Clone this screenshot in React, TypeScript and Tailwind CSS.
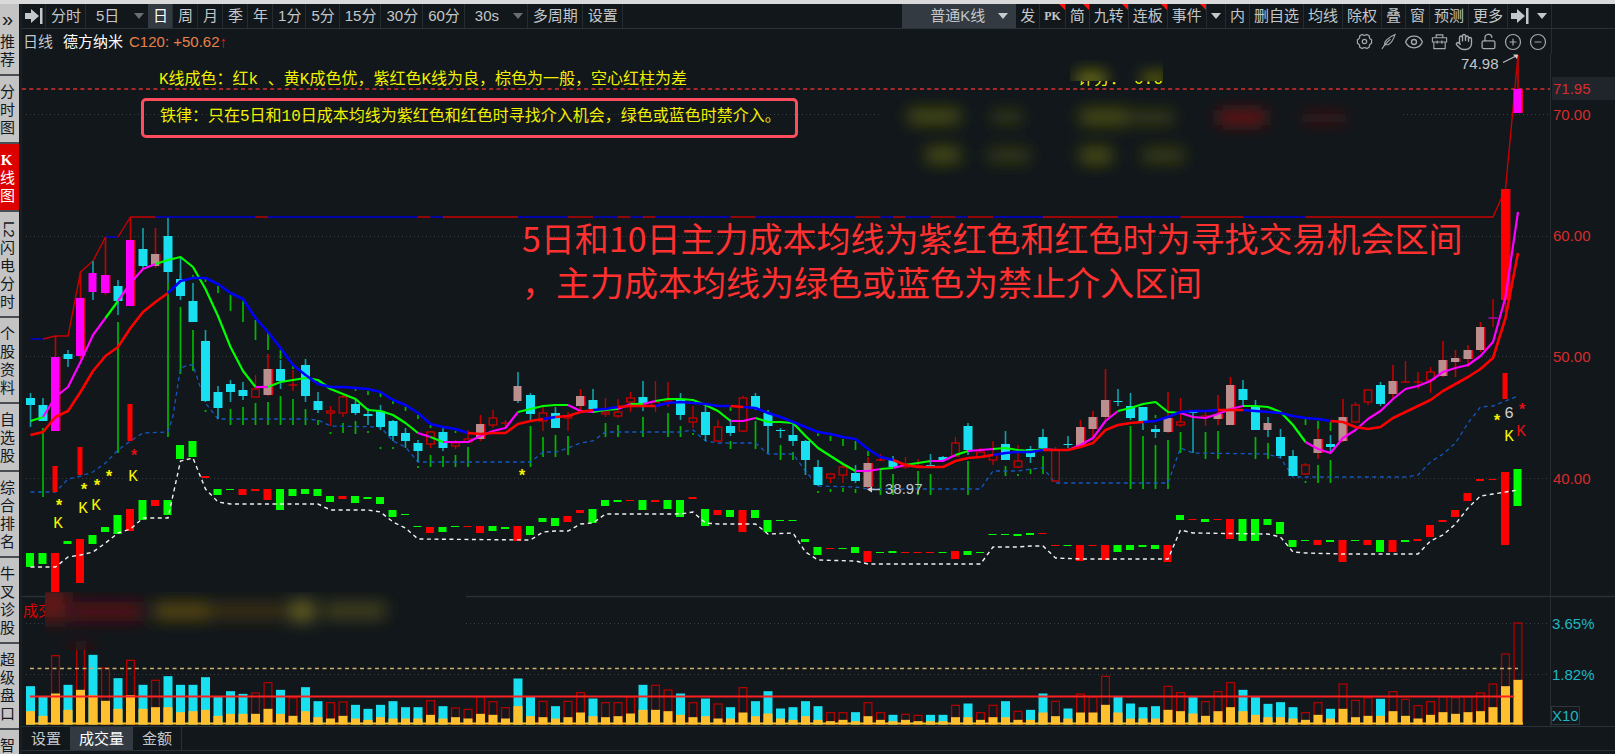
import React from 'react';
import { CircleMinus, CirclePlus, Eye, Hand, LockOpen } from 'lucide-react';

type Candle = [kind: string, high: number, top: number, bottom: number, low: number];

// kinds: c falling, r hollow rising, R solid rising, m/M magenta, b/B brown (capitals: cyan wick), x cross
const candles: Candle[] = [
  ['c', 393, 398, 405, 427], ['c', 398, 405, 421, 421], ['m', 336, 357, 431, 431], ['c', 350, 354, 359, 367],
  ['m', 271, 298, 356, 359], ['M', 261, 273, 292, 300], ['m', 237, 275, 293, 295], ['c', 280, 286, 301, 315],
  ['m', 217, 240, 306, 306], ['c', 228, 249, 266, 269], ['b', 228, 254, 266, 268], ['c', 218, 236, 272, 283],
  ['c', 258, 279, 296, 300], ['c', 283, 301, 322, 322], ['c', 330, 341, 401, 402], ['c', 386, 392, 408, 419],
  ['c', 380, 384, 392, 402], ['c', 382, 390, 396, 400], ['r', 375, 389, 397, 397], ['b', 354, 369, 395, 396],
  ['c', 360, 369, 381, 389], ['x', 370, 385, 385, 391], ['c', 359, 365, 396, 402], ['c', 392, 401, 410, 413],
  ['r', 406, 411, 413, 426], ['r', 395, 397, 413, 417], ['c', 400, 404, 413, 415], ['c', 408, 414, 416, 425],
  ['c', 405, 411, 427, 430], ['c', 420, 421, 436, 441], ['c', 428, 433, 441, 448], ['c', 440, 443, 451, 462],
  ['r', 431, 432, 444, 448], ['c', 428, 432, 448, 451], ['r', 440, 443, 446, 449], ['r', 430, 439, 442, 443],
  ['b', 415, 424, 439, 441], ['r', 410, 418, 425, 428], ['x', 420, 423, 423, 427], ['B', 372, 386, 401, 403],
  ['c', 393, 395, 414, 420], ['r', 407, 413, 421, 431], ['c', 407, 413, 428, 428], ['r', 412, 416, 418, 431],
  ['b', 389, 396, 406, 411], ['c', 389, 400, 409, 413], ['r', 398, 412, 414, 417], ['r', 399, 412, 416, 418],
  ['r', 392, 398, 402, 412], ['c', 381, 397, 403, 411], ['r', 381, 402, 406, 412], ['x', 382, 401, 401, 407],
  ['c', 393, 400, 415, 420], ['r', 406, 418, 422, 428], ['c', 406, 412, 435, 441], ['r', 420, 427, 441, 442],
  ['c', 419, 426, 433, 436], ['r', 396, 398, 431, 432], ['c', 393, 396, 409, 410], ['c', 410, 413, 426, 453],
  ['c', 428, 430, 431, 438], ['c', 423, 435, 441, 446], ['c', 440, 441, 460, 475], ['c', 460, 467, 485, 486],
  ['r', 473, 474, 478, 483], ['r', 463, 467, 475, 483], ['c', 465, 473, 481, 483], ['b', 457, 463, 487, 489],
  ['x', 454, 460, 460, 461], ['c', 456, 460, 467, 468], ['r', 457, 464, 467, 469], ['x', 459, 466, 466, 468],
  ['c', 454, 465, 466, 468], ['c', 456, 457, 460, 461], ['r', 437, 443, 456, 457], ['c', 423, 426, 450, 455],
  ['r', 448, 452, 457, 457], ['r', 441, 455, 460, 465], ['c', 431, 444, 460, 460], ['r', 445, 461, 467, 468],
  ['c', 446, 449, 457, 463], ['c', 429, 437, 448, 449], ['r', 447, 450, 481, 482], ['c', 436, 444, 445, 448],
  ['b', 420, 427, 446, 447], ['b', 411, 417, 429, 438], ['b', 369, 400, 417, 420], ['c', 389, 401, 402, 406],
  ['c', 393, 406, 418, 420], ['c', 407, 407, 422, 430], ['c', 425, 429, 432, 438], ['b', 392, 418, 432, 433],
  ['r', 398, 422, 425, 427], ['c', 412, 412, 413, 453], ['x', 410, 416, 416, 426], ['b', 395, 414, 419, 425],
  ['b', 377, 385, 425, 425], ['c', 380, 389, 400, 407], ['c', 400, 407, 430, 430], ['B', 417, 423, 430, 437],
  ['c', 429, 437, 456, 458], ['c', 450, 456, 476, 476], ['r', 463, 465, 474, 475], ['b', 429, 439, 453, 459],
  ['c', 435, 444, 447, 452], ['b', 399, 417, 441, 442], ['r', 402, 405, 422, 422], ['r', 389, 390, 402, 405],
  ['c', 382, 385, 404, 406], ['b', 365, 381, 394, 398], ['x', 361, 382, 382, 383], ['x', 372, 382, 382, 389],
  ['r', 367, 372, 380, 393], ['b', 341, 360, 376, 377], ['b', 350, 358, 362, 377], ['b', 345, 350, 359, 367],
  ['b', 322, 327, 350, 352], ['x', 299, 318, 318, 327], ['R', 189, 189, 300, 312], ['m', 55, 89, 113, 113],
];

const ma5 = [
  421, 417, 397, 387, 362, 335, 318, 301, 283, 269, 264, 260, 257, 267, 289, 316, 347, 371, 387, 387,
  382, 380, 378, 380, 389, 394, 399, 410, 411, 415, 423, 433, 437, 442, 442, 442, 436, 431, 428, 412,
  409, 406, 405, 405, 411, 412, 410, 409, 404, 404, 401, 399, 399, 400, 405, 411, 421, 421, 418, 422,
  422, 423, 436, 448, 456, 464, 471, 471, 469, 468, 465, 463, 461, 461, 455, 451, 450, 449, 448, 450,
  451, 449, 450, 450, 445, 438, 421, 411, 408, 404, 402, 412, 413, 417, 418, 414, 409, 406, 406, 407,
  412, 425, 442, 449, 453, 438, 430, 419, 411, 399, 389, 386, 381, 372, 368, 365, 356, 342, 297, 212,
];

const ma10 = [
  435, 432, 417, 411, 392, 371, 356, 347, 328, 312, 302, 293, 281, 278, 278, 284, 293, 299, 318, 332,
  348, 365, 375, 384, 387, 387, 388, 389, 392, 400, 405, 413, 424, 427, 429, 433, 434, 433, 433, 424,
  421, 419, 417, 416, 412, 410, 409, 407, 406, 406, 406, 403, 402, 403, 404, 406, 406, 407, 408, 413,
  417, 422, 427, 432, 434, 437, 439, 449, 457, 460, 465, 467, 467, 467, 461, 458, 457, 455, 453, 452,
  452, 450, 450, 450, 447, 443, 430, 425, 423, 422, 421, 417, 412, 411, 411, 410, 410, 410, 411, 412,
  413, 416, 418, 419, 421, 422, 427, 429, 427, 418, 412, 406, 400, 391, 384, 377, 369, 358, 318, 253,
];

// runs of [last bar index, rising]
const trend5: [number, boolean][] = [
  [1, false], [6, true], [7, false], [10, true], [18, false], [19, true], [31, false], [32, true], [33, false],
  [39, true], [43, false], [45, true], [47, false], [48, true], [49, false], [50, true], [56, false], [58, true],
  [66, false], [68, true], [69, false], [70, true], [72, false], [74, true], [75, false], [77, true], [81, false],
  [87, true], [92, false], [97, true], [102, false], [119, true],
];
const trend10: [number, boolean][] = [
  [11, true], [35, false], [41, true], [42, false], [45, true], [47, false], [50, true], [56, false], [57, true],
  [69, false], [77, true], [81, false], [89, true], [95, false], [97, true], [104, false], [119, true],
];

const upper = [339, 339, 336, 336, 272, 261, 237, 237].concat(Array(110).fill(217), [189, 55]);

// [bar index, y] corner points
const support: [number, number][] = [
  [0, 492], [2, 492], [3, 479], [4, 476], [5, 472], [6, 463], [7, 450], [8, 441], [9, 433], [11, 432], [11.4, 416],
  [12, 368], [12.6, 365], [13, 365], [14, 403], [15, 419], [22, 419], [23, 420], [24, 426], [28, 427], [29, 441],
  [30, 447], [31, 462], [40, 462], [41, 452], [42, 452], [43, 448], [44, 443], [45, 441], [46, 432], [52, 432],
  [53, 430], [54, 441], [55, 443], [58, 443], [59, 454], [61, 454], [62, 471], [63, 486], [66, 487], [67, 489],
  [76, 489], [77, 471], [79, 471], [80, 469], [81, 468], [82, 483], [91, 483], [92, 448], [93, 453], [99, 454],
  [100, 458], [101, 477], [110, 477], [111, 475], [112, 462], [113, 454], [114, 443], [115, 423], [116, 407],
  [117, 406], [118, 401], [119, 396],
];
const signal: [number, number][] = [
  [0, 567], [2, 567], [3, 557], [4, 555], [5, 552], [6, 543], [7, 533], [8, 529], [9, 518], [11, 518], [12, 461],
  [13, 458], [14, 489], [15, 502], [16, 504], [23, 504], [24, 510], [27, 510], [28, 512], [29, 522], [30, 528],
  [31, 539], [40, 540], [41, 532], [42, 531], [43, 531], [44, 524], [45, 523], [46, 514], [52, 514], [53, 512],
  [54, 523], [55, 524], [58, 524], [59, 534], [61, 533], [62, 552], [63, 560], [66, 561], [67, 564], [76, 564],
  [77, 547], [79, 547], [80, 546], [81, 546], [82, 558], [84, 559], [91, 559], [92, 530], [93, 533], [99, 534],
  [100, 537], [101, 552], [102, 553], [105, 554], [110, 554], [111, 554], [112, 541], [113, 535], [114, 524],
  [115, 508], [116, 496], [117, 494], [118, 492], [119, 490],
];

type Block = [color: 'g' | 'r', top: number, bottom: number];
const blocks: Block[] = [
  ['g', 553, 567], ['g', 553, 564], ['r', 553, 592], ['g', 541, 544], ['r', 539, 583], ['g', 535, 544], ['g', 527, 532],
  ['g', 515, 534], ['r', 509, 531], ['g', 500, 520], ['r', 500, 506], ['g', 500, 515], ['g', 445, 459], ['g', 441, 457],
  ['r', 476, 478], ['g', 489, 495], ['g', 489, 490], ['r', 489, 495], ['r', 489, 491], ['r', 489, 500], ['g', 489, 510],
  ['g', 489, 496], ['g', 489, 494], ['g', 489, 496], ['g', 496, 502], ['r', 496, 499], ['g', 496, 503], ['g', 497, 499],
  ['g', 497, 504], ['g', 510, 517], ['g', 514, 515], ['g', 526, 527], ['r', 527, 533], ['g', 527, 532], ['g', 526, 527],
  ['r', 526, 527], ['r', 526, 533], ['g', 526, 531], ['g', 527, 529], ['r', 526, 541], ['g', 526, 535], ['g', 518, 522],
  ['g', 518, 526], ['r', 516, 522], ['r', 510, 513], ['g', 509, 523], ['g', 500, 506], ['g', 500, 502], ['r', 500, 501],
  ['g', 500, 510], ['r', 500, 502], ['g', 500, 509], ['g', 500, 517], ['r', 497, 499], ['g', 509, 526], ['r', 510, 515],
  ['g', 510, 517], ['r', 510, 532], ['g', 510, 518], ['g', 520, 532], ['g', 520, 521], ['g', 520, 521], ['g', 539, 542],
  ['g', 547, 555], ['r', 548, 549], ['g', 548, 549], ['g', 547, 553], ['r', 551, 562], ['g', 552, 553], ['g', 551, 553],
  ['r', 552, 553], ['r', 552, 553], ['r', 552, 553], ['g', 552, 553], ['r', 551, 559], ['g', 551, 555], ['g', 552, 553],
  ['g', 534, 535], ['g', 534, 535], ['g', 534, 536], ['g', 533, 535], ['r', 533, 534], ['r', 545, 546], ['g', 545, 546],
  ['r', 545, 561], ['r', 545, 546], ['r', 545, 560], ['g', 545, 552], ['g', 545, 550], ['g', 545, 547], ['g', 545, 549],
  ['r', 545, 562], ['g', 515, 520], ['r', 519, 520], ['g', 519, 522], ['r', 519, 520], ['r', 519, 539], ['g', 519, 541],
  ['g', 519, 541], ['g', 519, 525], ['g', 522, 534], ['g', 540, 547], ['g', 540, 541], ['r', 540, 545], ['g', 540, 542],
  ['r', 540, 562], ['g', 540, 541], ['r', 540, 545], ['g', 540, 552], ['r', 540, 552], ['g', 540, 542], ['r', 539, 541],
  ['r', 525, 537], ['r', 520, 522], ['r', 510, 517], ['r', 493, 501], ['r', 479, 481], ['r', 479, 480], ['r', 472, 545],
  ['g', 469, 506],
];

// [bar index, top, bottom]
const greenTicks = [
  [1, 428, 497], [7, 322, 453], [11, 283, 437], [12, 273, 279], [12, 307, 374], [13, 275, 278], [13, 330, 371],
  [14, 279, 282], [14, 410, 412], [15, 286, 293], [16, 295, 311], [16, 409, 425], [17, 301, 322], [17, 407, 425],
  [18, 320, 340], [18, 403, 425], [19, 333, 350], [19, 402, 425], [20, 350, 359], [20, 396, 425], [21, 366, 369],
  [21, 399, 425], [22, 409, 425], [23, 420, 425], [24, 432, 434], [25, 423, 433], [26, 389, 391], [26, 421, 434],
  [27, 391, 395], [27, 431, 433], [28, 393, 397], [28, 447, 449], [29, 401, 404], [29, 447, 449], [30, 407, 411],
  [31, 415, 419], [31, 466, 468], [32, 425, 428], [32, 455, 467], [33, 456, 467], [34, 431, 433], [34, 455, 467],
  [35, 447, 467], [40, 426, 467], [41, 437, 457], [42, 435, 457], [43, 436, 455], [46, 423, 437], [47, 425, 437],
  [49, 417, 437], [51, 413, 437], [52, 426, 437], [53, 433, 435], [56, 407, 411], [56, 441, 449], [58, 421, 449],
  [60, 445, 460], [61, 452, 460], [63, 433, 436], [63, 491, 493], [64, 436, 441], [64, 489, 492], [65, 439, 446],
  [65, 488, 492], [66, 441, 450], [66, 489, 493], [67, 451, 456], [68, 468, 495], [69, 474, 495], [71, 471, 495],
  [72, 474, 495], [75, 461, 495], [78, 466, 476], [79, 474, 476], [80, 469, 474], [81, 456, 474], [88, 426, 489],
  [89, 436, 489], [90, 415, 418], [90, 445, 489], [91, 440, 489], [92, 432, 453], [94, 432, 459], [95, 431, 459],
  [98, 437, 459], [99, 443, 459], [102, 419, 425], [102, 481, 483], [103, 421, 429], [103, 465, 483], [104, 422, 431],
  [104, 460, 483],
];
const redMarks = [[2, 466, 492], [4, 447, 475], [8, 404, 441], [118, 373, 399]];

// [c/r, height, big-order height] in thirds of a unit
const volumes: [string, number, number][] = [
  ['c', 115, 40], ['c', 83, 26], ['r', 208, 93], ['c', 119, 44], ['r', 228, 104], ['c', 209, 88], ['r', 171, 71],
  ['c', 139, 47], ['r', 194, 88], ['c', 119, 47], ['r', 134, 52], ['c', 145, 52], ['c', 119, 37], ['c', 119, 40],
  ['c', 142, 44], ['c', 85, 26], ['c', 100, 32], ['c', 92, 32], ['r', 96, 32], ['r', 127, 47], ['c', 104, 32],
  ['r', 81, 26], ['c', 112, 40], ['c', 70, 22], ['r', 67, 18], ['r', 69, 26], ['c', 59, 18], ['c', 47, 14],
  ['c', 59, 22], ['c', 70, 18], ['c', 52, 18], ['c', 52, 18], ['r', 73, 29], ['c', 55, 18], ['r', 51, 22],
  ['r', 47, 18], ['r', 85, 32], ['r', 70, 29], ['r', 52, 18], ['c', 138, 55], ['c', 84, 25], ['r', 71, 22],
  ['c', 55, 18], ['r', 71, 22], ['r', 97, 36], ['c', 78, 25], ['r', 67, 22], ['r', 67, 25], ['r', 84, 33],
  ['c', 119, 44], ['r', 119, 44], ['r', 105, 40], ['c', 93, 29], ['r', 67, 22], ['c', 78, 25], ['r', 63, 18],
  ['c', 52, 18], ['r', 112, 36], ['c', 70, 25], ['c', 100, 33], ['c', 48, 18], ['c', 52, 14], ['c', 70, 25],
  ['c', 55, 14], ['r', 37, 10], ['r', 37, 14], ['c', 37, 10], ['r', 67, 25], ['r', 37, 14], ['c', 29, 10],
  ['r', 32, 14], ['r', 29, 10], ['c', 29, 10], ['c', 29, 10], ['r', 59, 22], ['c', 63, 22], ['r', 37, 14],
  ['r', 59, 22], ['c', 70, 22], ['r', 41, 14], ['c', 44, 14], ['c', 93, 36], ['r', 71, 25], ['c', 48, 18],
  ['r', 93, 36], ['r', 84, 36], ['r', 146, 59], ['c', 84, 36], ['c', 63, 18], ['c', 52, 18], ['c', 55, 18],
  ['r', 116, 44], ['r', 97, 40], ['c', 82, 33], ['r', 70, 26], ['r', 100, 40], ['r', 127, 52], ['c', 104, 40],
  ['c', 82, 29], ['c', 62, 22], ['c', 67, 22], ['c', 52, 18], ['r', 37, 14], ['r', 67, 29], ['c', 47, 18],
  ['r', 123, 47], ['r', 74, 22], ['r', 82, 26], ['c', 77, 26], ['r', 100, 40], ['r', 77, 26], ['r', 58, 18],
  ['r', 70, 29], ['r', 85, 37], ['r', 82, 32], ['r', 85, 37], ['r', 96, 40], ['r', 123, 52], ['r', 213, 115],
  ['r', 306, 134],
];

const marks: [x: number, y: number, text: string, color: string][] = [
  [59, 504, '*', '#f4f400'], [84, 488, '*', '#f4f400'], [97, 484, '*', '#f4f400'], [109, 475, '*', '#f4f400'],
  [134, 454, '*', '#e01010'], [522, 474, '*', '#f4f400'], [1497, 419, '*', '#f4f400'], [1522, 408, '*', '#e01010'],
  [58, 523, 'K', '#f4f400'], [83, 508, 'K', '#f4f400'], [96, 505, 'K', '#f4f400'], [133, 476, 'K', '#f4f400'],
  [1509, 436, 'K', '#f4f400'], [1521, 431, 'K', '#e01010'], [1509, 413, '6', '#d0d0d0'],
];

const STEP = 12.5;
const BASE = 724.5;
const px = (i: number) => 30.5 + i * STEP;
const CYAN = '#18e0f0';
const RED = '#c80000';

const bodyColors: Record<string, string> = {
  c: CYAN, m: '#ff00ff', M: '#ff00ff', b: '#bc8f8f', B: '#bc8f8f', R: '#ff0000',
};

function toPoints(points: [number, number][]) {
  return points.map(([i, y]) => `${px(i)},${y}`).join(' ');
}

function TrendLine({ values, runs, up, down, width }: {
  values: number[]; runs: [number, boolean][]; up: string; down: string; width: number;
}) {
  return (
    <g fill="none" strokeWidth={width} strokeLinejoin="round">
      {runs.map(([end, rising], n) => {
        const start = n === 0 ? 0 : runs[n - 1][0];
        const part = values.slice(start, end + 1).map((y, k): [number, number] => [start + k, y]);
        return <polyline key={end} points={toPoints(part)} stroke={rising ? up : down} />;
      })}
    </g>
  );
}

function CandleBar({ i, candle }: { i: number; candle: Candle }) {
  const [kind, high, top, bottom, low] = candle;
  const x = px(i);
  const cyanWick = kind === 'c' || kind === 'M' || kind === 'B';
  const wick = cyanWick ? '#12a0ac' : RED;
  if (kind === 'x') {
    return (
      <g stroke={RED} strokeWidth="1.4">
        <path d={`M${x} ${high}V${low}`} />
        <path d={`M${x - 4.5} ${top}h9`} stroke={i === 117 ? '#c000c0' : RED} />
      </g>
    );
  }
  if (kind === 'r') {
    return (
      <g stroke={RED} strokeWidth="1.3" fill="none">
        <path d={`M${x} ${high}V${top}M${x} ${bottom}V${low}`} />
        <rect x={x - 3.8} y={top} width="7.6" height={bottom - top} />
      </g>
    );
  }
  return (
    <g>
      <path d={`M${x} ${high}V${low}`} stroke={wick} strokeWidth="1.6" />
      {!cyanWick && <rect x={x + 3} y={top} width="2" height={bottom - top} fill="#e00020" />}
      <rect x={x - 4.5} y={top} width={kind === 'c' ? 9 : 8} height={bottom - top} fill={bodyColors[kind]} />
    </g>
  );
}

function AxisLabels() {
  return (
    <g fontSize="15" fontFamily="Liberation Sans, Arial, sans-serif">
      <rect x="1552" y="77" width="63" height="23" fill="#1f252b" />
      <g fill="#d82c2c">
        <text x="1553" y="94">71.95</text>
        <text x="1553" y="120">70.00</text>
        <text x="1553" y="241">60.00</text>
        <text x="1553" y="362">50.00</text>
        <text x="1553" y="484">40.00</text>
      </g>
      <g fill="#1cb8c4">
        <text x="1552" y="629">3.65%</text>
        <text x="1552" y="680">1.82%</text>
        <rect x="1551.5" y="706.5" width="28" height="18" fill="none" stroke="#2e363c" />
        <text x="1552" y="721">X10</text>
      </g>
    </g>
  );
}

function Chart() {
  return (
    <svg viewBox="22 54 1593 672" className="block h-auto w-full" role="img" aria-label="德方纳米 日线">
      <defs>
        <filter id="soft" x="-50%" y="-80%" width="200%" height="260%">
          <feGaussianBlur stdDeviation="8" />
        </filter>
        <clipPath id="legendClip"><rect x="45" y="592" width="421" height="58" /></clipPath>
        <clipPath id="scoreClip"><rect x="1070" y="54" width="93" height="27" /></clipPath>
      </defs>

      <g stroke="#3a4146" strokeDasharray="1 3" fill="none">
        <path d="M26 114.5H882M1403 114.5H1550M26 236.5H1550M26 356.5H1550M26 478.5H1550" />
        <path d="M26 623.5H1550M26 674.5H1550" />
      </g>
      <path d="M22 596.5H1615" stroke="#2b3237" strokeWidth="1.5" />
      <path d="M22 89H1550" stroke="#dc3030" strokeWidth="1.3" strokeDasharray="4 3.3" />

      <g filter="url(#soft)">
        <g fill="#4a4d10">
          <rect x="908" y="109" width="52" height="15" />
          <rect x="992" y="111" width="30" height="12" opacity=".7" />
          <rect x="926" y="147" width="34" height="16" />
          <rect x="988" y="149" width="42" height="13" opacity=".7" />
          <rect x="1080" y="109" width="48" height="16" />
          <rect x="1130" y="111" width="44" height="13" opacity=".7" />
          <rect x="1080" y="147" width="32" height="17" />
          <rect x="1142" y="149" width="42" height="13" opacity=".8" />
        </g>
        <g fill="#6a1412">
          <rect x="1218" y="110" width="48" height="15" />
          <rect x="1302" y="112" width="44" height="12" opacity=".5" />
        </g>
      </g>
      <g fill="#f0f000" fontSize="16" fontFamily="Liberation Mono, Noto Sans CJK SC, monospace">
        <text x="1078" y="84">评分：</text>
        <text x="1134" y="84">0.6</text>
      </g>
      <rect x="1070" y="60" width="100" height="21" fill="#11171b" />
      <g clipPath="url(#scoreClip)">
        <g filter="url(#soft)" fill="#77780e">
          <rect x="1076" y="72" width="30" height="14" />
          <rect x="1142" y="74" width="26" height="10" />
        </g>
      </g>

      <g stroke="#00b800" strokeWidth="1.7">
        {greenTicks.map(([i, top, bottom]) => (
          <path key={`${i}-${top}`} d={`M${px(i)} ${top}V${bottom}`} />
        ))}
      </g>
      <polyline points={toPoints(support)} fill="none" stroke="#1458c0" strokeWidth="1.3" strokeDasharray="4 3.5" />
      <TrendLine values={upper} runs={trend5} up="#c80000" down="#0000d8" width={1.4} />
      {candles.map((candle, i) => <CandleBar key={i} i={i} candle={candle} />)}
      <TrendLine values={ma5} runs={trend5} up="#ff00ff" down="#00ff00" width={2.2} />
      <TrendLine values={ma10} runs={trend10} up="#ff0000" down="#0000ff" width={2.6} />

      {redMarks.map(([i, top, bottom]) => (
        <rect key={i} x={px(i) - 3} y={top} width="5" height={bottom - top} fill="#ff0000" />
      ))}
      {blocks.map(([color, top, bottom], i) => (
        <rect key={i} x={px(i) - 4.5} y={top} width="8" height={bottom - top} fill={color === 'g' ? '#00ff00' : '#ff0000'} />
      ))}
      <polyline points={toPoints(signal)} fill="none" stroke="#f0f0f0" strokeWidth="1.4" strokeDasharray="4 3.5" />

      <g fontSize="16" textAnchor="middle" fontFamily="Liberation Mono, monospace">
        {marks.map(([x, y, text, color]) => (
          <text key={`${x}-${y}`} x={x} y={text === '*' ? y + 7 : y + 5} fontWeight={text === '*' ? 700 : 400} fill={color}>
            {text}
          </text>
        ))}
      </g>
      <g fontSize="15" fill="#c3c7ca" fontFamily="Liberation Sans, Arial, sans-serif">
        <text x="1461" y="69">74.98</text>
        <text x="885" y="494">38.97</text>
      </g>
      <path d="M1503 62.500L1515 56.500M870 489.500H880" stroke="#b8bcbf" strokeWidth="1.3" />
      <path d="M1518 54.500L1513 54.500L1517 59ZM867 489.500L872 486.500V492.500Z" fill="#d0d3d5" />

      {/* turnover panel */}
      {volumes.map(([kind, total, big], i) => {
        const left = px(i) - 4.5;
        const top = BASE - total / 3;
        return (
          <g key={i}>
            {kind === 'c'
              ? <rect x={left} y={top} width="9" height={total / 3} fill={CYAN} />
              : <rect x={left + 0.6} y={top + 0.5} width="7.8" height={total / 3 - 1} fill="none" stroke="#b00000" strokeWidth="1.3" />}
            <rect x={left} y={BASE - big / 3} width="9" height={big / 3} fill="#ffc030" />
          </g>
        );
      })}
      <path d="M26 723.5H1523" stroke="#ffc030" strokeWidth="2" />
      <path d="M30 668.500H1518" stroke="#c8b070" strokeWidth="1.6" strokeDasharray="4 3.5" />
      <path d="M30 696.500H1514" stroke="#ff2020" strokeWidth="2" />
      <text x="23" y="616" fill="#e00000" fontSize="15" fontFamily="Noto Sans CJK SC, sans-serif">成交量</text>
      <g clipPath="url(#legendClip)">
        <rect x="45" y="592" width="421" height="58" fill="#11171b" />
        <g filter="url(#soft)">
          <rect x="36" y="588" width="32" height="34" fill="#621416" />
          <rect x="72" y="602" width="70" height="19" fill="#521118" />
          <rect x="154" y="602" width="54" height="18" fill="#54440e" />
          <rect x="208" y="603" width="78" height="16" fill="#3a2f14" />
          <rect x="290" y="600" width="25" height="22" fill="#605a22" />
          <rect x="324" y="602" width="62" height="17" fill="#433f1c" />
          <rect x="70" y="646" width="22" height="10" fill="#501414" />
        </g>
      </g>
      <path d="M1550.500 54V726" stroke="#262d32" />
      <AxisLabels />
    </svg>
  );
}

function Caret({ className = '' }: { className?: string }) {
  return (
    <svg viewBox="0 0 10 6" className={`h-[6px] w-[10px] ${className}`} fill="currentColor" aria-hidden="true">
      <path d="M0 0h10L5 6z" />
    </svg>
  );
}

function JumpIcon() {
  return (
    <svg viewBox="0 0 18 16" className="h-4 w-[18px]" fill="#c3c8cc" aria-hidden="true">
      <path d="M0 5h6V1l8 7-8 7v-4H0zM15 0h2.500v16H15z" />
    </svg>
  );
}

function ToolButton({ children, active = false, flag = false, tight = false }: {
  children: React.ReactNode; active?: boolean; flag?: boolean; tight?: boolean;
}) {
  return (
    <button
      type="button"
      className={`relative flex h-6 shrink-0 items-center border-r border-[#262d32] pr-1 ${tight ? 'pl-1' : 'pl-[5px]'} ${active ? 'bg-[#333a42] text-white' : ''}`}
    >
      {children}
      {flag && <i className="absolute top-0 right-0 border-t-[6px] border-l-[6px] border-t-[#ff1010] border-l-transparent" />}
    </button>
  );
}

function Toolbar() {
  return (
    <div className="flex h-[25px] items-start border-b border-[#2b3237]">
      <button type="button" aria-label="跳转" className="flex h-6 items-center border-r border-[#262d32] pr-0.5 pl-[3px]">
        <JumpIcon />
      </button>
      <ToolButton>分时</ToolButton>
      <button type="button" className="flex h-6 w-[62px] items-center justify-between pr-1 pl-[10px]">
        5日<Caret className="text-[#6a6e72]" />
      </button>
      <ToolButton active>日</ToolButton>
      {['周', '月', '季', '年', '1分', '5分', '15分', '30分', '60分'].map((label) => (
        <ToolButton key={label}>{label}</ToolButton>
      ))}
      <button type="button" className="flex h-6 w-[63px] items-center justify-between border-r border-[#262d32] pr-1 pl-[10px]">
        30s<Caret className="text-[#6a6e72]" />
      </button>
      <ToolButton>多周期</ToolButton>
      <ToolButton>设置</ToolButton>

      <div className="flex-1" />

      <button type="button" className="flex h-6 w-[114px] items-center justify-between bg-[#333a42] pr-2 pl-7">
        普通K线<Caret className="text-[#c8cccf]" />
      </button>
      <ToolButton tight>发</ToolButton>
      <ToolButton tight flag>
        <span className="font-['Liberation_Serif'] text-xs font-bold">PK</span>
      </ToolButton>
      <ToolButton tight flag>简</ToolButton>
      <ToolButton tight flag>九转</ToolButton>
      <ToolButton tight flag>连板</ToolButton>
      <ToolButton tight flag>事件</ToolButton>
      <ToolButton tight><Caret /></ToolButton>
      {['内', '删自选', '均线', '除权', '叠', '窗', '预测', '更多'].map((label) => (
        <ToolButton key={label} tight>{label}</ToolButton>
      ))}
      <div className="flex h-6 items-center gap-2 pr-1 pl-[3px]">
        <JumpIcon />
        <Caret />
      </div>
      <div className="h-6 w-16 border-l border-[#262d32]" />
    </div>
  );
}

function ChartHeader() {
  return (
    <div className="flex h-[25px] items-center pl-px">
      <span className="text-[#c3c7ca]">日线</span>
      <span className="ml-[10px] text-white">德方纳米</span>
      <span className="ml-[6px] text-[#e8824a]">C120: +50.62</span>
      <span className="text-[#e01818]">↑</span>
      <div className="ml-auto flex h-full items-center gap-[7px] pr-1 text-[#a4a9ad]">
        <svg viewBox="0 0 18 18" className="size-[17px]" fill="none" stroke="currentColor" strokeWidth="1.3" aria-label="设置">
          <path d="M6.500 1.500Q9 3.500 11.500 1.500L14 3Q13.700 6 16.500 7.200V10.800Q13.700 12 14 15L11.500 16.500Q9 14.500 6.500 16.500L4 15Q4.300 12 1.500 10.800V7.200Q4.300 6 4 3Z" />
          <circle cx="9" cy="9" r="2.300" />
        </svg>
        <svg viewBox="0 0 18 18" className="size-[17px]" fill="none" stroke="currentColor" strokeWidth="1.2" aria-label="画笔">
          <path d="M2 17L5 12.500C4 9.500 8.500 4.500 16 1.500C14.500 6 13 10.500 8.500 12.500H5L11 6.500" />
        </svg>
        <Eye className="size-5" strokeWidth={1.6} />
        <svg viewBox="0 0 18 18" className="size-[17px]" fill="none" stroke="currentColor" strokeWidth="1.2" aria-label="工具箱">
          <path d="M5.500 5V2H12.500V5M1.500 5H16.500V9.500H1.500ZM3 9.500V16.500H15V9.500M6.500 8V11.500M11.500 8V11.500" />
        </svg>
        <Hand className="size-[18px]" strokeWidth={1.8} />
        <LockOpen className="size-[17px]" strokeWidth={1.8} />
        <CirclePlus className="size-[18px]" strokeWidth={1.6} />
        <CircleMinus className="size-[18px]" strokeWidth={1.6} />
      </div>
      <div className="h-full w-16 border-l border-[#262d32]" />
    </div>
  );
}

const sideItems = [
  ['»', '推', '荐'], ['分', '时', '图'], ['K', '线', '图'], ['L2', '闪', '电', '分', '时'], ['个', '股', '资', '料'],
  ['自', '选', '股'], ['综', '合', '排', '名'], ['牛', '叉', '诊', '股'], ['超', '级', '盘', '口'], ['智'],
];

function sideGlyphClass(glyph: string) {
  if (glyph === 'L2') return "h-5 font-['Liberation_Sans'] [writing-mode:vertical-rl]";
  if (glyph === 'K') return "h-[18px] w-[13px] text-center font-['Liberation_Serif'] font-bold";
  if (glyph === '»') return 'h-[22px] w-[15px] text-center text-xl leading-4';
  return 'h-[18px]';
}

function Sidebar() {
  return (
    <nav className="flex w-[22px] shrink-0 flex-col overflow-hidden border-r-2 border-[#1a1f23] bg-[#11171b]">
      {sideItems.map((item) => {
        const active = item[0] === 'K';
        return (
          <button
            key={item.join('')}
            type="button"
            className={`flex w-[19px] shrink-0 flex-col items-start border-b-2 border-[#4a4e52] pt-[7px] pb-[5px] text-[15px] leading-[18px] last:grow last:border-b-0 last:pb-0 ${active ? 'bg-[#dc0000] text-white' : 'bg-[#c4c4c4] text-[#14181c]'}`}
          >
            {item.map((glyph) => <span key={glyph} className={sideGlyphClass(glyph)}>{glyph}</span>)}
          </button>
        );
      })}
    </nav>
  );
}

function IndicatorTabs() {
  return (
    <div className="flex h-[25px] border-y border-[#2b3237]" role="tablist">
      <button type="button" role="tab" className="px-[9px] text-[#c3c7ca]">设置</button>
      <button type="button" role="tab" aria-selected="true" className="bg-[#333a42] px-[9px] text-white">成交量</button>
      <button type="button" role="tab" className="border-r border-[#2b3237] px-[9px] text-[#c3c7ca]">金额</button>
    </div>
  );
}

export default function App() {
  return (
    <div className="flex h-screen flex-col overflow-hidden bg-[#11171b] font-['Liberation_Sans','Noto_Sans_CJK_SC',sans-serif] text-[15px] leading-[18px] text-[#c3c7ca]">
      <div className="h-1 shrink-0 bg-[#dadada]" />
      <div className="flex min-h-0 flex-1">
        <Sidebar />
        <main className="min-w-0 flex-1">
          <Toolbar />
          <ChartHeader />
          <div className="relative">
            <Chart />
            <div className="absolute top-4 left-[119px] w-[657px] font-['Liberation_Mono','Noto_Sans_CJK_SC',monospace] text-base leading-5 whitespace-pre text-[#f0f000]">
              <p className="pl-[18px]">K线成色：红k 、黄K成色优，紫红色K线为良，棕色为一般，空心红柱为差</p>
              <p className="mt-2 rounded-[5px] border-[3px] border-[#ff4d5e] pt-[6px] pb-2 pl-4">铁律：只在5日和10日成本均线为紫红色和红色时寻找介入机会，绿色或蓝色时禁介入。</p>
            </div>
            <p className="absolute top-[162px] left-[500px] font-['Noto_Sans_CJK_SC',sans-serif] text-[34px] leading-[44px] whitespace-nowrap text-[#ff3030]">
              5日和10日主力成本均线为紫红色和红色时为寻找交易机会区间
              <br />
              ，主力成本均线为绿色或蓝色为禁止介入区间
            </p>
          </div>
          <IndicatorTabs />
        </main>
      </div>
    </div>
  );
}
